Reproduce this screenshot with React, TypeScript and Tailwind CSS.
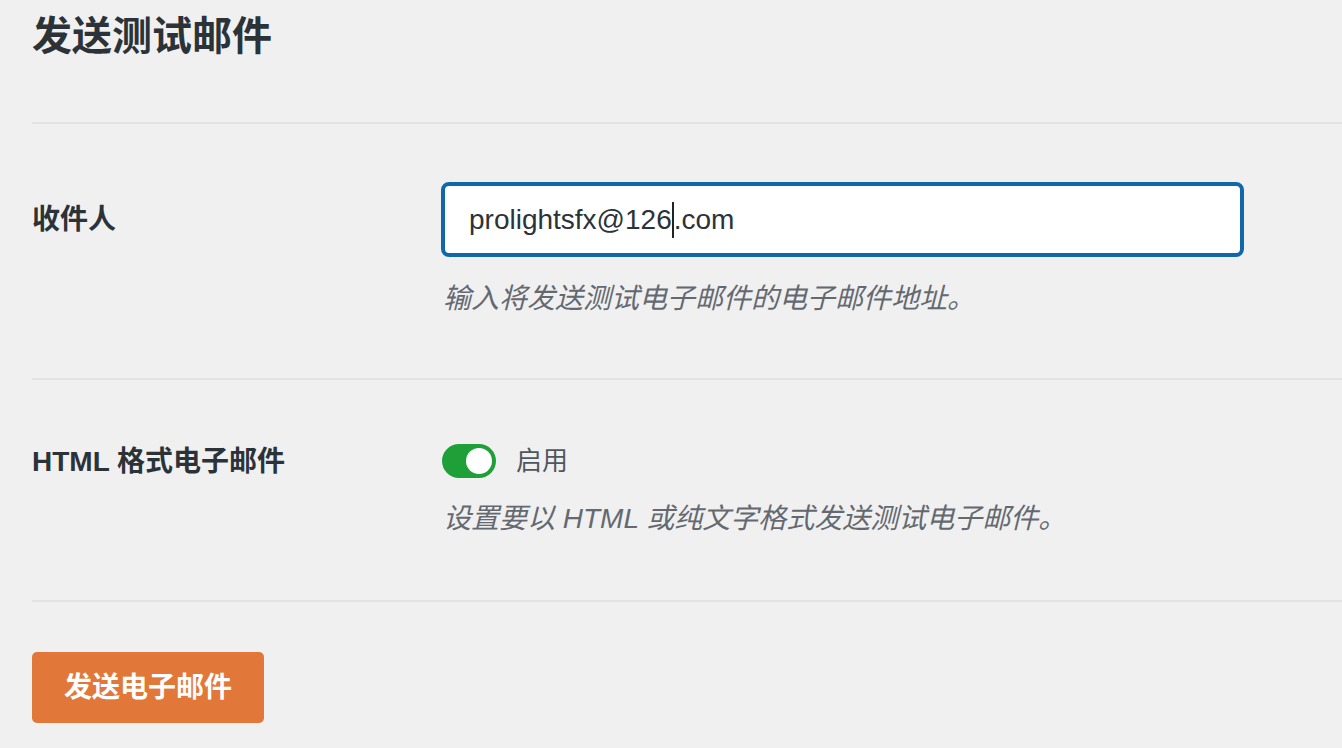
import React from "react"

const FONT = "font-['Liberation_Sans','Noto_Sans_CJK_SC',sans-serif]"

function Toggle() {
  return (
    <div className="flex h-[34px] w-[54px] items-center justify-end rounded-full bg-[#1f9f38] pr-[4px]">
      <div className="h-[26px] w-[26px] rounded-full bg-white" />
    </div>
  )
}

function Row({
  label,
  labelHeight,
  control,
  help,
  helpMargin,
  padTop,
  padBottom,
}: {
  label: string
  labelHeight: string
  control: React.ReactNode
  help: string
  helpMargin: string
  padTop: string
  padBottom: string
}) {
  return (
    <div className={`flex border-t-2 border-[#e3e3e3] ${padTop} ${padBottom}`}>
      <div className={`flex w-[409px] shrink-0 items-center ${labelHeight}`}>
        <span className="text-[28px] font-bold leading-[39px] text-[#2c3338]">{label}</span>
      </div>
      <div className="flex flex-col">
        {control}
        <p className={`${helpMargin} pl-[2px] text-[28px] italic leading-[39px] text-[#646970]`}>{help}</p>
      </div>
    </div>
  )
}

export default function App() {
  return (
    <div className={`min-h-[748px] w-full overflow-hidden bg-[#f0f0f0] pl-[32px] ${FONT}`}>
      <h1 className="h-[122px] pt-[12px] text-[40px] font-bold leading-[48px] text-[#2c3338]">
        发送测试邮件
      </h1>

      <Row
        label="收件人"
        labelHeight="h-[75px]"
        padTop="pt-[58px]"
        padBottom="pb-[60px]"
        helpMargin="mt-[22px]"
        help="输入将发送测试电子邮件的电子邮件地址。"
        control={
          <div className="flex h-[75px] w-[803px] items-center rounded-[8px] border-4 border-[#1168a8] bg-white pl-[24px]">
            <span className="text-[28px] text-[#2c3338]">prolightsfx@126</span>
            <span className="h-[36px] w-[2px] bg-[#1d2327]" />
            <span className="text-[28px] text-[#2c3338]">.com</span>
          </div>
        }
      />

      <Row
        label="HTML 格式电子邮件"
        labelHeight="h-[46px]"
        padTop="pt-[58px]"
        padBottom="pb-[62px]"
        helpMargin="mt-[15px]"
        help="设置要以 HTML 或纯文字格式发送测试电子邮件。"
        control={
          <div className="flex h-[46px] items-center gap-[20px] pl-[1px]">
            <Toggle />
            <span className="text-[26px] text-[#50575e]">启用</span>
          </div>
        }
      />

      <div className="border-t-2 border-[#e3e3e3] pt-[50px]">
        <button className="h-[71px] w-[232px] rounded-[5px] bg-[#e2773a] text-[28px] font-bold text-white">
          发送电子邮件
        </button>
      </div>
    </div>
  )
}
